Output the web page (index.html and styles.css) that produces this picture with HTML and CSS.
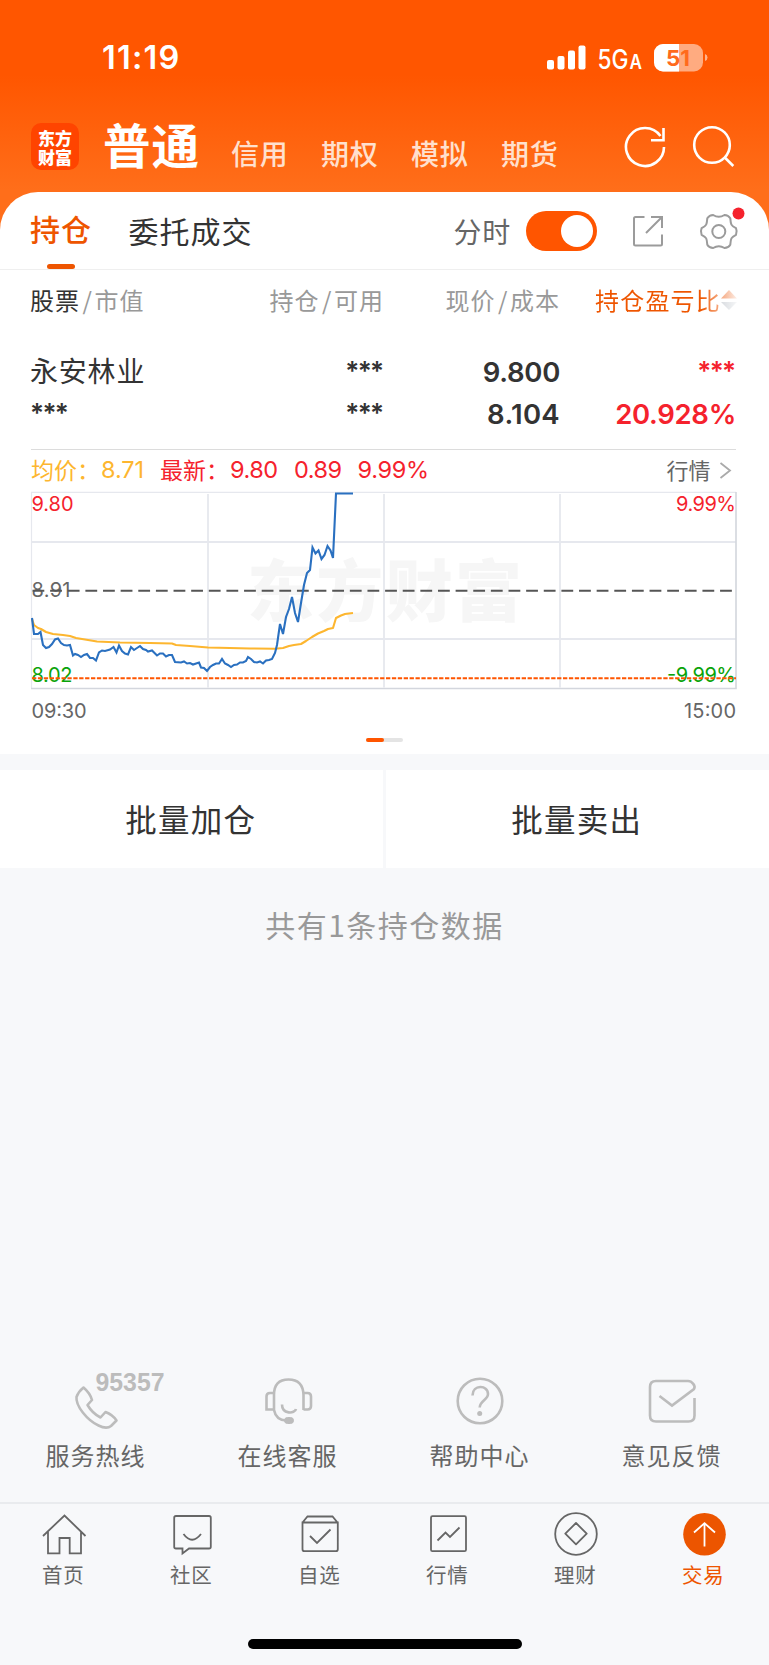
FILE: index.html
```html
<!DOCTYPE html>
<html lang="zh-CN">
<head>
<meta charset="utf-8">
<title>持仓</title>
<link rel="stylesheet" href="styles.css">
</head>
<body>
<div class="app">
  <header class="top">
    <div class="status">
      <span class="clock">11:19</span>
      <svg class="status-icons" width="162" height="32" viewBox="0 0 162 32">
        <g fill="#fff">
          <rect x="0" y="19" width="7" height="9.500" rx="2"/>
          <rect x="10.500" y="15" width="7" height="13.500" rx="2"/>
          <rect x="21" y="9.500" width="7" height="19" rx="2"/>
          <rect x="31.500" y="4.500" width="7" height="24" rx="2"/>
          <path d="M158 13v7q2.500-.8 2.500-3.500t-2.500-3.500z" opacity=".55"/>
        </g>
        <text class="net" x="50.500" y="27.500" textLength="31" lengthAdjust="spacingAndGlyphs">5G</text>
        <text class="net-sub" x="82.500" y="27.500" textLength="12.500" lengthAdjust="spacingAndGlyphs">A</text>
        <clipPath id="lvl"><rect x="107" y="0" width="25" height="32"/></clipPath>
        <rect x="107" y="3" width="49" height="27.500" rx="9" fill="#fff" opacity=".5"/>
        <rect x="107" y="3" width="49" height="27.500" rx="9" fill="#fff" clip-path="url(#lvl)"/>
        <text class="pct" x="119" y="24.500" textLength="24" lengthAdjust="spacingAndGlyphs">51</text>
      </svg>
    </div>
    <nav class="accounts">
      <div class="logo"><span>东方</span><span>财富</span></div>
      <b class="acc-on">普通</b>
      <span class="acc">信用</span><span class="acc">期权</span><span class="acc">模拟</span><span class="acc">期货</span>
      <svg class="top-icons" width="112" height="44" viewBox="0 0 112 44" fill="none" stroke="#fff" stroke-width="2.600">
        <path d="M41 22a19 19 0 1 1-3.500-11"/>
        <path d="M40.500 3v12.300H28"/>
        <circle cx="89" cy="20" r="17.800"/>
        <path d="M101.300 32l9 9"/>
      </svg>
    </nav>
  </header>

  <main class="card">
    <div class="tabs">
      <span class="tab tab-on">持仓</span>
      <span class="tab">委托成交</span>
      <span class="mode">分时</span>
      <i class="toggle"></i>
      <svg class="tools" width="122" height="50" viewBox="0 0 122 50" fill="none" stroke="#9b9b9b" stroke-width="2">
        <path d="M20.500 11H11.500Q10 11 10 12.500V38Q10 39.500 11.500 39.500H36.500Q38 39.500 38 38V28.500M27 11H38V22M38 11L22 27"/>
        <g transform="translate(94.800 25.500)">
          <path d="M17.200-3.300Q18.600 0 17.200 3.300C12 6 12 7 11.500 13.200Q9.500 16.500 5.700 16.500C1.500 13.800-1.500 13.800-5.700 16.500Q-9.500 16.500-11.500 13.200C-12 7-12 6-17.200 3.300Q-18.600 0-17.200-3.300C-12-6-12-7-11.500-13.200Q-9.500-16.500-5.700-16.500C-1.500-13.800 1.500-13.800 5.700-16.500Q9.500-16.500 11.500-13.200C12-7 12-6 17.200-3.300Z"/>
          <circle r="6.500"/>
        </g>
        <circle cx="114.500" cy="7.500" r="6" fill="#f5222d" stroke="none"/>
      </svg>
    </div>

    <div class="grid head">
      <span><em>股票</em><s>/</s>市值</span>
      <span>持仓<s>/</s>可用</span>
      <span>现价<s>/</s>成本</span>
      <span class="sorted"><span class="fade">持仓盈亏比</span><svg class="sort" width="16" height="22" viewBox="0 0 16 22">
        <linearGradient id="sa"><stop offset="0" stop-color="#f5a880"/><stop offset="1" stop-color="#fdeee6"/></linearGradient>
        <linearGradient id="sb"><stop offset="0" stop-color="#d9dce0"/><stop offset="1" stop-color="#f6f7f8"/></linearGradient>
        <path d="M0 9.500L8 1l8 8.500z" fill="url(#sa)"/><path d="M0 13l8 8 8-8z" fill="url(#sb)"/></svg></span>
    </div>
    <div class="grid row">
      <span class="name">永安林业</span><span class="num mask">***</span><span class="num">9.800</span><span class="num mask up">***</span>
    </div>
    <div class="grid row row2">
      <span class="num mask">***</span><span class="num mask">***</span><span class="num wide">8.104</span><span class="num up">20.928%</span>
    </div>

    <section class="quote">
      <svg class="chart" width="709" height="275" viewBox="29 449 709 275">
        <path d="M31 449.500H736" stroke="#dcdcdc"/>
        <g class="cjk" font-size="23">
          <text x="31" y="479" fill="#fdb62f">均价：</text>
          <text x="160" y="479" fill="#f5222d">最新：</text>
          <text x="666.500" y="478.500" fill="#666" font-size="22">行情</text>
        </g>
        <g class="lat" font-size="23.500" fill="#f5222d">
          <text x="101" y="478" fill="#fdb62f" textLength="43">8.71</text>
          <text x="230" y="478" textLength="48">9.80</text>
          <text x="294" y="478" textLength="48">0.89</text>
          <text x="357.500" y="478" textLength="71.500">9.99%</text>
        </g>
        <path d="M720.500 463l9.500 7.500-9.500 7.500" fill="none" stroke="#aaa" stroke-width="1.800"/>
        <text class="mark" x="247" y="616" textLength="275">东方财富</text>
        <g class="lat" font-size="20">
          <text x="31.500" y="511" fill="#f5222d" textLength="42">9.80</text>
          <text x="31.500" y="597" fill="#666" textLength="39">8.91</text>
          <text x="31.500" y="682" fill="#0aa30a" textLength="41">8.02</text>
          <text x="676" y="511" fill="#f5222d" textLength="60">9.99%</text>
          <text x="667" y="682" fill="#0aa30a" textLength="69">-9.99%</text>
          <text x="31.500" y="718" fill="#666" textLength="55">09:30</text>
          <text x="684" y="718" fill="#666" textLength="52">15:00</text>
        </g>
        <g fill="none" stroke="#e6e8ee" stroke-width="1.800">
          <path d="M32 542H736M32 639H736M208 494V687.500M384 494V687.500M560 494V687.500"/>
          <path d="M31.500 688V492.300H736" stroke-width="1.200"/>
          <path d="M736 492V688.500H31" stroke="#d3d6dd" stroke-width="1.600"/>
        </g>
        <path d="M32.500 590.700H736" stroke="#555" stroke-width="2" stroke-dasharray="11.800 5.830"/>
        <path d="M32 678.200H736" stroke="#ff5500" stroke-width="2" stroke-dasharray="4.300 1.600"/>
        <polyline fill="none" stroke="#fdb62f" stroke-width="2.100" stroke-linejoin="round" points="32,619 34,625 38,628 41,629 46,632 53,634 63,635 70,636 76,638 88,640 97,641.500 120,642.500 150,643 172,643.500 176,645 190,646 208,647.500 230,648 250,648.500 275,648.800 283,648 289,646 294,645 301,644 306,641 312,637 318,633.500 324,631 328,629 333,628 336,618 341,615.500 345,614 353,613"/>
        <polyline fill="none" stroke="#2a70c0" stroke-width="2.100" stroke-linejoin="miter" points="32,618 34,634 38,634 40.500,632 43,645 46,648 49,647 52,644 55,639.500 58,638.500 61,643 64,645 67,645.500 70,645 73,655.500 75,654 78,655 81,657 84,655 87,654 90,658 93,658 96,660.500 99,652.500 102,650.500 105,651 110,649.500 113.500,647 116.500,652.500 119,645.500 122,651 125,653.500 128,654.500 131,647 134,650 137,648 140,646 143,649 146,650 148,651.500 152,650.500 157,655.500 160,653.500 163,653.500 166,656.500 169,655 172,655 175,662 181,662.500 184,661.500 187,663.500 190,663 193,664.500 199,662.500 201,667.500 204,668 207,671 210,667 213,665 216,663.500 219,663.500 222,659 225,663.500 228,665 231,667 234,665 237,664.500 240,662.500 243,662.500 246,661 248,657 251,659 254,662 257,662.500 260,661.500 263,663.500 266,660.500 269,660 272,659 275,653 277,645 280,624 283,634 286,617 289,609 292,597 295,613 298,622 301,603 304,585 307,573 310,570 312.500,547.500 315.500,553.500 318.500,550.500 321.500,559 324.500,555 327.500,546 330.500,550.500 333,558 336,493.500 353,493.500"/>
      </svg>
      <div class="pager"><i></i><i></i></div>
    </section>
  </main>

  <div class="batch"><button>批量加仓</button><button>批量卖出</button></div>
  <p class="count">共有1条持仓数据</p>

  <div class="services">
    <div class="svc">
      <svg width="120" height="64" viewBox="36 1368 120 64" fill="none" stroke="#bcbcbc" stroke-width="2.600" stroke-linejoin="round">
        <path d="M83.500 1387.500q-5 4-7 9.500c-1 9 11 23.500 22 28.500q8 4 12.500.5l5.500-5.500q-4-6-11-8.500l-5 5.500q-8-4-13-12.500l4.500-5q-2-7-8.500-12.500z"/>
        <text class="hot" x="95.500" y="1391" textLength="69" lengthAdjust="spacingAndGlyphs">95357</text>
      </svg><span>服务热线</span>
    </div>
    <div class="svc">
      <svg width="120" height="64" viewBox="228 1368 120 64" fill="none" stroke="#bcbcbc" stroke-width="2.600">
        <path d="M274 1410V1395Q274 1379.500 288.500 1379.500T303.500 1395V1410M274 1393h-4q-3.500 0-3.500 3.500V1409.500h7.500M303.500 1393h4q3.500 0 3.500 3.500V1406q0 3.500-3.500 3.500h-4M274 1410q2 10 12 10.500M282 1404.500c0 10 13 9.500 14 4.500"/>
        <rect x="284.500" y="1417.500" width="9" height="6" rx="3" fill="#bcbcbc" stroke-width="1"/>
      </svg><span>在线客服</span>
    </div>
    <div class="svc">
      <svg width="120" height="64" viewBox="420 1368 120 64" fill="none" stroke="#bcbcbc" stroke-width="2.600">
        <circle cx="480" cy="1401" r="22.300"/>
        <path d="M472.500 1395.500c0-11 15.500-11 15.500-1.500 0 6-8.300 6.500-8.300 13.500"/>
        <circle cx="479.700" cy="1413.500" r="2.500" fill="#bcbcbc" stroke="none"/>
      </svg><span>帮助中心</span>
    </div>
    <div class="svc">
      <svg width="120" height="64" viewBox="612 1368 120 64" fill="none" stroke="#bcbcbc" stroke-width="2.600">
        <path d="M659.500 1396l12.500 9.500 22-16.500c2-3-2-8-6-8H656q-6 0-6 6v28.500q0 6 6 6h32.500q6 0 6-6V1398"/>
      </svg><span>意见反馈</span>
    </div>
  </div>

  <nav class="bar">
    <a><svg width="46" height="46" viewBox="41 1510 46 46"><path d="M43 1536l21.500-20.500L85.500 1536M48 1532v21.300h11.500V1538h10.200v15.300H81V1532"/></svg><span>首页</span></a>
    <a><svg width="46" height="46" viewBox="169 1510 46 46"><path d="M176 1516h33q1.800 0 1.800 1.800v28.900q0 1.800-1.800 1.800h-20l-6.500 5v-5H176q-1.800 0-1.800-1.800v-28.900q0-1.800 1.800-1.800zM183.500 1534q8.500 11.500 17.500 0"/></svg><span>社区</span></a>
    <a><svg width="46" height="46" viewBox="297 1510 46 46"><path d="M302.500 1522.500l5-6h25l5 6M302.500 1522.500h35.300v26.700q0 2-2 2h-31.300q-2 0-2-2zM310 1536l7 7 13.500-13.500"/></svg><span>自选</span></a>
    <a><svg width="46" height="46" viewBox="425 1510 46 46"><rect x="431" y="1516.200" width="35" height="35" rx="1.500"/><path d="M437.500 1540.500l8-8 4.500 4.500 9.500-9.500"/></svg><span>行情</span></a>
    <a><svg width="46" height="46" viewBox="553 1510 46 46"><circle cx="576" cy="1534" r="20.800"/><path d="M576 1523l10.700 10.700-10.700 10.700-10.700-10.700z" stroke-linejoin="round"/></svg><span>理财</span></a>
    <a class="on"><svg width="46" height="46" viewBox="681 1510 46 46"><circle cx="704.500" cy="1534.300" r="21.300" fill="#ec5500" stroke="none"/><path d="M704.500 1546.500v-23M694 1532.500l10.500-9.300 10.500 9.300" stroke="#fff"/></svg><span>交易</span></a>
  </nav>
  <div class="home"></div>
</div>
</body>
</html>
```
FILE: styles.css
```css
* { box-sizing: border-box; }
body { margin: 0; }
.app {
  width: 769px; height: 1665px; overflow: hidden;
  display: flex; flex-direction: column;
  background: #f7f8fa;
  font-family: "Noto Sans CJK SC", sans-serif;
  color: #333; white-space: nowrap;
}
.top {
  height: 236px; flex: none;
  background: linear-gradient(#ff5600 75px, #ff6e1a 190px);
}
.status { height: 114px; padding: 41px 60px 0 102px; display: flex; justify-content: space-between; }
.clock { font: 600 32.500px/34px Inter, sans-serif; color: #fff; letter-spacing: 1.200px; }
.status-icons { overflow: visible; }
.net, .net-sub { font: 500 26.500px Inter, sans-serif; fill: #fff; }
.net-sub { font-size: 20px; font-weight: 600; }
.pct { font: 700 22px Inter, sans-serif; fill: #ff6a1c; }
.accounts { height: 66px; padding: 0 0 0 31px; display: flex; align-items: center; color: #fff; }
.logo {
  width: 48px; height: 47px; border-radius: 10px; background: #ff4400;
  display: flex; flex-direction: column; justify-content: center; align-items: center;
  margin-top: -1px; font-size: 17px; line-height: 19px; font-weight: 900;
}
.acc-on { font-size: 47.500px; line-height: 60px; letter-spacing: 1px; margin: -7px 31px 0 24px; font-weight: 700; }
.acc { font-size: 28px; line-height: 40px; letter-spacing: .8px; margin: 11px 32.400px 0 0; color: #ffe0ce; font-weight: 500; }
.top-icons { margin: 0 0 0 32px; }

.card { height: 562px; margin-top: -44px; flex: none; background: #fff; border-radius: 38px 38px 0 0; }
.tabs { height: 78px; padding: 0 0 0 30px; display: flex; align-items: center; border-bottom: 1.500px solid #efefef; }
.tab { font-size: 30px; line-height: 75px; letter-spacing: 1px; margin-right: 36.500px; }
.tab-on {
  color: #ee5500; font-weight: 500; align-self: flex-start;
  padding-top: 4px; line-height: 65px;
}
.tab-on::after { content: ""; display: block; width: 28px; height: 5.500px; margin: 2.500px 0 0 17px; border-radius: 3px; background: #ee5500; }
.mode { margin-left: 164.500px; font-size: 28px; letter-spacing: .8px; color: #666; line-height: 70px; }
.toggle { width: 71px; height: 40px; margin-left: 14.500px; border-radius: 20px; background: #ff5500; padding: 4px; display: flex; justify-content: flex-end; }
.toggle::after { content: ""; width: 32px; height: 32px; border-radius: 50%; background: #fff; }
.tools { margin-left: 27.500px; }

.grid { display: grid; grid-template-columns: 150px 204px 176px 176px; padding-left: 30px; }
.grid > span + span { text-align: right; }
.head { height: 62px; line-height: 60px; font-size: 24px; letter-spacing: 1px; color: #999; }
.head em { font-style: normal; color: #333; }
.head s { text-decoration: none; padding: 0 1.500px 0 2.500px; }
.head .sorted { display: flex; justify-content: flex-end; align-items: center; height: 60px; }
.sort { margin-right: -1px; }
.fade { letter-spacing: 1.200px; color: transparent; background: linear-gradient(90deg, #ee5500 84%, #f6b08a) text; }
.row { height: 42px; line-height: 42px; margin-top: 19px; }
.row2 { margin-top: 0; }
.name { font-size: 28px; letter-spacing: .8px; line-height: 39px; }
.num { font: 600 27.500px/42px Inter, sans-serif; letter-spacing: -.3px; }
.wide { letter-spacing: .3px; }
.mask { font-size: 26px; letter-spacing: -1.600px; line-height: 40px; }
.grid > .mask + .num, .grid > .name + .mask { padding-right: 0; }
.grid > .mask:not(:first-child) { padding-right: 1.500px; }
.up { color: #f5222d; }

.quote { margin-top: 14px; padding-left: 29px; }
.chart { display: block; }
.cjk { font-family: "Noto Sans CJK SC", sans-serif; }
.lat { font-family: Inter, sans-serif; }
.mark { font: 900 67px "Noto Sans CJK SC", sans-serif; fill: #f6f6f6; }
.pager { width: 37px; height: 4px; margin: 14px 0 0 336.500px; display: flex; background: #e4e4e4; border-radius: 2px; }
.pager i:first-child { width: 18px; background: #ff5500; border-radius: 2px; }

.batch { height: 98px; margin-top: 16px; flex: none; display: grid; grid-template-columns: 383px 1fr; gap: 3px; }
.batch button { border: 0; padding: 0 1.500px 2px 0; background: #fff; color: #333; font: 400 31.500px/96px "Noto Sans CJK SC", sans-serif; letter-spacing: 1.300px; }
.count { margin: 34px 0 0; text-align: center; font-size: 30px; line-height: 44px; letter-spacing: 1.500px; color: #999; }

.services { margin-top: auto; display: grid; grid-template-columns: repeat(4, 192px); }
.svc { display: flex; flex-direction: column; align-items: center; font-size: 24px; line-height: 36px; letter-spacing: 1px; color: #666; height: 134px; }
.svc svg { overflow: visible; margin-bottom: 5px; }
.svc span { margin-right: 1px; }
.hot { font: 700 25.500px "Liberation Sans", sans-serif; letter-spacing: 0; fill: #bcbcbc; stroke: none; }

.bar { height: 136px; flex: none; border-top: 2px solid #e9ebee; display: grid; grid-template-columns: repeat(6, 128px); }
.bar a { display: flex; flex-direction: column; align-items: center; font-size: 20.500px; line-height: 28px; letter-spacing: .8px; color: #666; padding-top: 6px; }
.bar svg { fill: none; stroke: #666; stroke-width: 1.800; margin-bottom: 4px; overflow: visible; }
.bar span { margin-right: 1.500px; }
.bar .on { color: #ee5500; }
.home { width: 274px; height: 10px; margin: 1px 0 16px 247.500px; flex: none; border-radius: 5px; background: #000; }
```
